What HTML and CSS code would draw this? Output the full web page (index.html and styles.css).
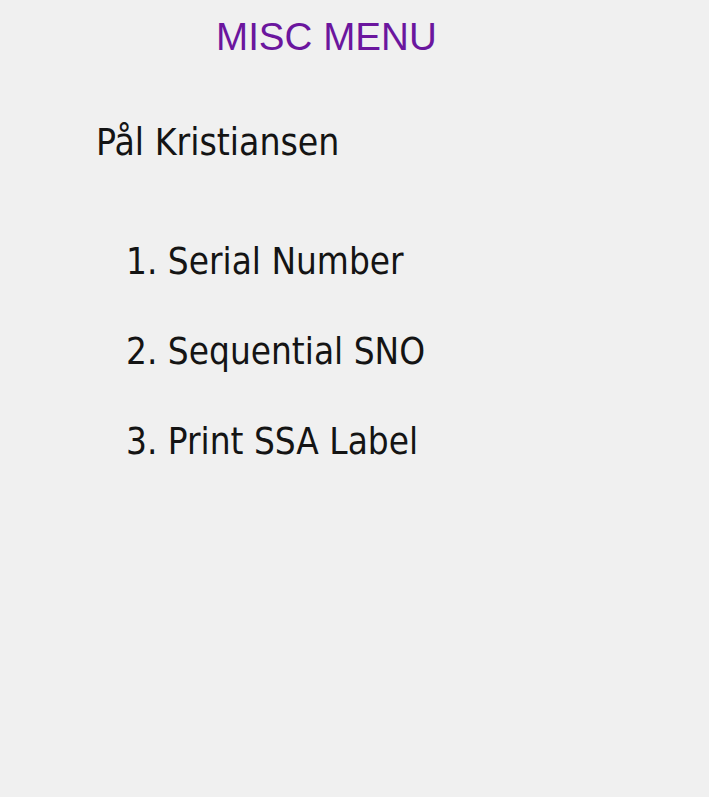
FILE: index.html
```html
<!DOCTYPE html>
<html lang="en">
<head>
    <meta charset="UTF-8">
    <title>Misc Menu</title>
    <link rel="stylesheet" href="styles.css">
</head>
<body>
    <div id="menu-screen">
        <h1 class="menu-title">MISC MENU</h1>
        <div class="user-name">Pål Kristiansen</div>
        <ol class="menu-list">
            <li>1. Serial Number</li>
            <li>2. Sequential SNO</li>
            <li>3. Print SSA Label</li>
        </ol>
    </div>
</body>
</html>
```

FILE: styles.css
```css
body {
    margin: 0;
    padding: 0;
    background-color: #f0f0f0;
    color: #141414;
    font-family: 'DejaVu Sans Condensed', 'DejaVu Sans', sans-serif;
    min-height: 100vh;
}

#menu-screen {
    padding-top: 14px;
}

.menu-title {
    margin: 0 0 0 216px;
    font-family: 'Liberation Sans', Arial, sans-serif;
    font-weight: normal;
    font-size: 38.6px;
    line-height: 46px;
    color: #6b169e;
}

.user-name {
    margin: 60px 0 0 96px;
    font-size: 37px;
    line-height: 46px;
}

.menu-list {
    list-style: none;
    margin: 73px 0 0 126px;
    padding: 0;
}

.menu-list li {
    font-size: 36.6px;
    line-height: 46px;
    margin-bottom: 44px;
}
```
